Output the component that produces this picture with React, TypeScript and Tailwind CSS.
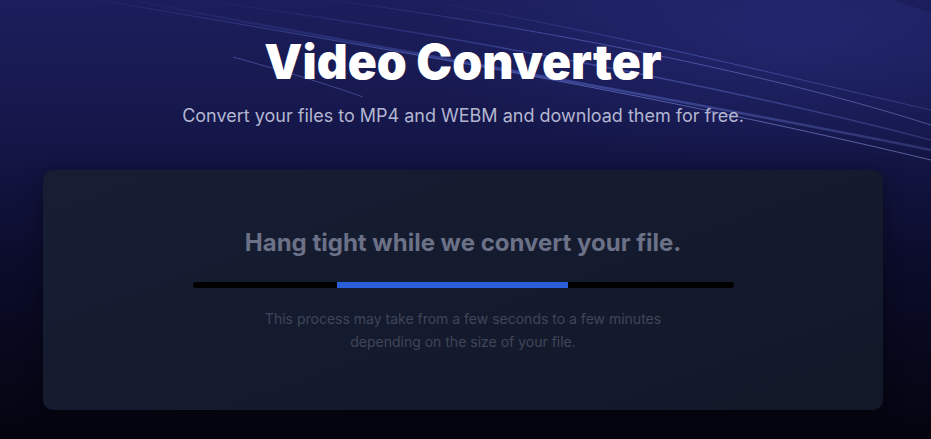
import React from 'react';

function Streaks() {
  return (
    <svg
      className="pointer-events-none absolute inset-0 h-full w-full"
      viewBox="0 0 931 439"
      preserveAspectRatio="none"
    >
      <defs>
        <linearGradient id="fadeA" x1="0" y1="0" x2="1" y2="0">
          <stop offset="0" stopColor="#6f86ff" stopOpacity="0.05" />
          <stop offset="0.4" stopColor="#7d92ff" stopOpacity="0.5" />
          <stop offset="1" stopColor="#aab8ff" stopOpacity="0.45" />
        </linearGradient>
        <linearGradient id="fadeB" x1="0" y1="0" x2="1" y2="0">
          <stop offset="0" stopColor="#5a6fe8" stopOpacity="0" />
          <stop offset="0.5" stopColor="#6d82f5" stopOpacity="0.4" />
          <stop offset="1" stopColor="#8fa0ff" stopOpacity="0.2" />
        </linearGradient>
        <radialGradient id="glow" cx="0.7" cy="0.3" r="0.5">
          <stop offset="0" stopColor="#3845b0" stopOpacity="0.25" />
          <stop offset="1" stopColor="#3845b0" stopOpacity="0" />
        </radialGradient>
      </defs>
      <ellipse cx="640" cy="90" rx="380" ry="120" fill="url(#glow)" />
      <path d="M100 0 C 330 40, 640 90, 931 160" stroke="url(#fadeA)" strokeWidth="1" fill="none" />
      <path d="M130 0 C 360 45, 660 95, 931 150" stroke="url(#fadeB)" strokeWidth="2.5" fill="none" />
      <path d="M200 0 C 420 30, 700 80, 931 140" stroke="url(#fadeB)" strokeWidth="1.5" fill="none" />
      <path d="M330 0 C 520 25, 760 70, 931 125" stroke="url(#fadeA)" strokeWidth="0.8" fill="none" />
      <path d="M420 0 C 600 30, 800 80, 931 110" stroke="url(#fadeB)" strokeWidth="1" fill="none" />
      <path d="M233 57 C 280 70, 330 85, 363 97" stroke="#8a9cff" strokeOpacity="0.35" strokeWidth="1" fill="none" />
    </svg>
  );
}

export default function App() {
  return (
    <div
      className="relative min-h-[439px] w-full overflow-hidden bg-[linear-gradient(180deg,#1c1e5c_0%,#15174a_30%,#0b0c2a_60%,#04040f_100%)]"
      style={{ fontFamily: 'Inter, "Noto Sans", sans-serif' }}
    >
      <Streaks />
      <div className="relative flex flex-col items-center pr-[5px] pt-[30px]">
        <h1 className="text-[48px] font-black leading-[64px] text-white">
          Video Converter
        </h1>
        <p className="mt-[10px] text-[18px] leading-[24px] text-[#b3b6d1]">
          Convert your files to MP4 and WEBM and download them for free.
        </p>
        <div className="mt-[42px] flex h-[240px] w-[840px] flex-col items-center rounded-[10px] bg-[linear-gradient(160deg,#171d33_0%,#151b2e_50%,#121828_100%)] pt-[57px] shadow-[0_4px_20px_rgba(0,0,0,0.35)]">
          <h2 className="text-[24px] font-bold leading-[32px] text-[#6b7186]">
            Hang tight while we convert your file.
          </h2>
          <div className="relative mt-[23px] h-[6px] w-[541px] overflow-hidden rounded-full bg-black">
            <div className="absolute left-[144px] top-0 h-full w-[231px] bg-[#2b5fd9]" />
          </div>
          <p className="mt-[19px] text-center text-[14px] leading-[23px] text-[#3f4659]">
            This process may take from a few seconds to a few minutes
            <br />
            depending on the size of your file.
          </p>
        </div>
      </div>
    </div>
  );
}
